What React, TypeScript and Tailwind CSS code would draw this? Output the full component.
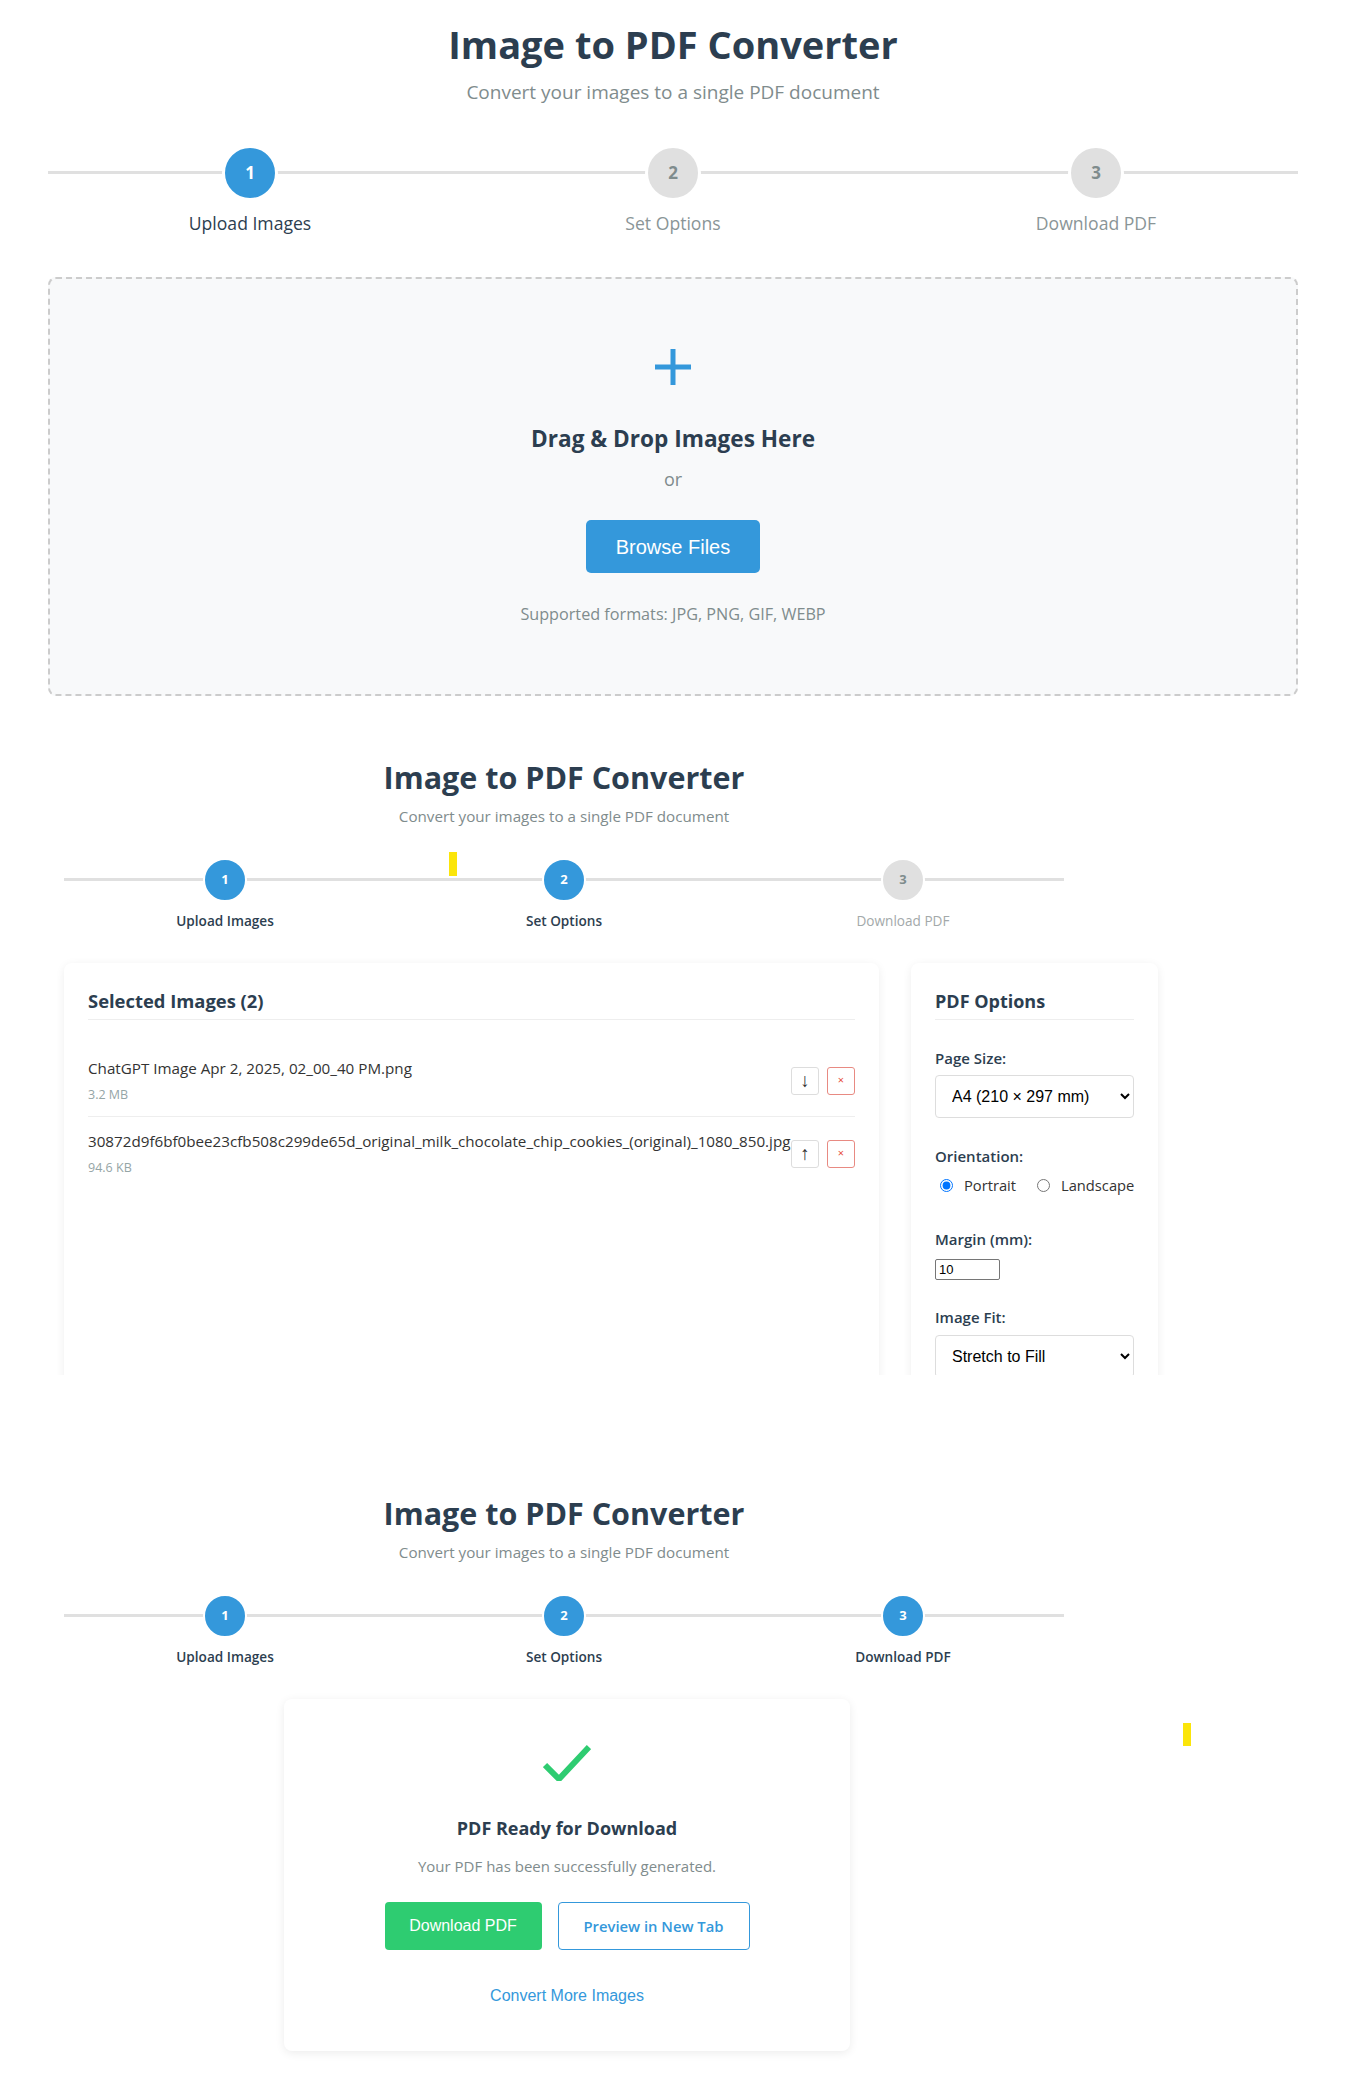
const sans = "font-['Open_Sans',sans-serif]";
const arial = "font-['Liberation_Sans',Arial,sans-serif]";

const STEP_LABELS = ["Upload Images", "Set Options", "Download PDF"];

function Steps({ active, big }: { active: number; big: boolean }) {
  return (
    <div
      className={
        big
          ? "relative w-[1250px] ml-[48px] mt-[41px] flex justify-between px-[127px]"
          : "relative w-[1000px] ml-[64px] mt-[32px] flex justify-between px-[101px]"
      }
    >
      <div
        className={
          big
            ? "absolute left-0 right-0 top-[26px] h-[3px] bg-[#e0e0e0]"
            : "absolute left-0 right-0 top-[20px] h-[3px] bg-[#e0e0e0]"
        }
      />
      {STEP_LABELS.map((label, i) => {
        const on = i + 1 <= active;
        return (
          <div key={label} className={big ? "relative w-[150px] flex flex-col items-center" : "relative w-[120px] flex flex-col items-center"}>
            <div
              className={
                (big
                  ? "w-[56px] h-[56px] border-[3px] text-[17px] "
                  : "w-[44px] h-[44px] border-2 text-[13px] ") +
                "rounded-full border-white flex items-center justify-center font-bold " +
                (on ? "bg-[#3498db] text-white" : "bg-[#e0e0e0] text-[#7f8c8d]")
              }
            >
              {i + 1}
            </div>
            <div
              className={
                (big ? "mt-[11px] leading-[22px] text-[17.6px] " : "mt-[10px] leading-[18px] text-[13.6px] ") +
                "whitespace-nowrap " +
                (on
                  ? big
                    ? "text-[#2c3e50] font-medium"
                    : "text-[#2c3e50] font-semibold"
                  : big
                    ? "text-[#8a9597]"
                    : "text-[#a3a9aa]")
              }
            >
              {label}
            </div>
          </div>
        );
      })}
    </div>
  );
}

function Header({ big }: { big: boolean }) {
  return (
    <div className={big ? "w-[1250px] ml-[48px] text-center" : "w-[1000px] ml-[64px] text-center"}>
      <h1
        className={
          big
            ? "text-[38px] leading-[48px] font-bold text-[#2c3e50]"
            : "text-[30.5px] leading-[40px] font-bold text-[#2c3e50]"
        }
      >
        Image to PDF Converter
      </h1>
      <p
        className={
          big
            ? "mt-[12px] text-[19px] leading-[24px] text-[#7f8c8d]"
            : "mt-[9px] text-[15.2px] leading-[20px] text-[#7f8c8d]"
        }
      >
        Convert your images to a single PDF document
      </p>
    </div>
  );
}

function ImageItem({ name, size, first }: { name: string; size: string; first: boolean }) {
  return (
    <div className={"flex items-center pt-[14px] pb-[13px] " + (first ? "border-b border-[#eeeeee]" : "")}>
      <div className="flex-1 min-w-0">
        <div className="text-[15.2px] leading-[20px] text-[#333333] whitespace-nowrap">{name}</div>
        <div className="mt-[9px] text-[12.5px] leading-[16px] text-[#95a5a6]">{size}</div>
      </div>
      <button className="w-[28px] h-[28px] shrink-0 border border-[#dddddd] rounded-[3px] bg-white text-[19px] leading-none text-[#333333] flex items-center justify-center">
        {first ? "↓" : "↑"}
      </button>
      <button className="ml-[8px] w-[28px] h-[28px] shrink-0 border border-[#e88a82] rounded-[3px] bg-white text-[11px] text-[#e74c3c] flex items-center justify-center">
        ×
      </button>
    </div>
  );
}

function OptionLabel({ children }: { children: string }) {
  return <div className="text-[15px] leading-[20px] font-semibold text-[#2c3e50]">{children}</div>;
}

export default function App() {
  return (
    <div className={`${sans} bg-white w-full min-h-[2098px] text-[#333333]`}>
      {/* step 1: upload */}
      <section className="pt-[20px]">
        <Header big />
        <Steps active={1} big />
        <div className="mt-[43px] ml-[48px] w-[1250px] border-2 border-dashed border-[#cccccc] rounded-[8px] bg-[#f8f9fa] flex flex-col items-center pt-[70px] pb-[69px]">
          <svg width="36" height="36" viewBox="0 0 36 36">
            <path d="M18 0V36M0 18H36" stroke="#3498db" strokeWidth="5" />
          </svg>
          <div className="mt-[39px] text-[22.6px] leading-[30px] font-bold text-[#2c3e50]">Drag &amp; Drop Images Here</div>
          <div className="mt-[14px] text-[18px] leading-[22px] text-[#7f8c8d]">or</div>
          <button className={`${arial} mt-[30px] w-[174px] h-[53px] rounded-[5px] bg-[#3498db] text-white text-[20px]`}>
            Browse Files
          </button>
          <div className="mt-[30px] text-[16.2px] leading-[22px] text-[#7f8c8d]">Supported formats: JPG, PNG, GIF, WEBP</div>
        </div>
      </section>

      {/* step 2: options */}
      <section className="relative h-[679px] overflow-hidden pt-[61px]">
        <Header big={false} />
        <Steps active={2} big={false} />
        <div className="absolute left-[449px] top-[156px] w-[8px] h-[24px] bg-[#fbe50a]" />
        <div className="mt-[33px] ml-[64px] flex items-start gap-[32px]">
          <div className="w-[815px] min-h-[480px] bg-white rounded-[8px] shadow-[0_2px_10px_rgba(0,0,0,0.07)] px-[24px] pt-[24px]">
            <h3 className="text-[18.4px] leading-[28px] pb-[4px] font-bold text-[#2c3e50] border-b border-[#eeeeee]">
              Selected Images (2)
            </h3>
            <div className="mt-[24px]">
              <ImageItem name="ChatGPT Image Apr 2, 2025, 02_00_40 PM.png" size="3.2 MB" first />
              <ImageItem
                name="30872d9f6bf0bee23cfb508c299de65d_original_milk_chocolate_chip_cookies_(original)_1080_850.jpg"
                size="94.6 KB"
                first={false}
              />
            </div>
          </div>
          <div className="w-[247px] min-h-[480px] bg-white rounded-[8px] shadow-[0_2px_10px_rgba(0,0,0,0.07)] px-[24px] pt-[24px]">
            <h3 className="text-[18px] leading-[28px] pb-[4px] font-bold text-[#2c3e50] border-b border-[#eeeeee]">
              PDF Options
            </h3>
            <div className="mt-[28px]">
              <OptionLabel>Page Size:</OptionLabel>
              <select
                defaultValue="a4"
                className={`${arial} mt-[7px] w-full h-[43px] border border-[#dddddd] rounded-[4px] bg-white px-[12px] text-[16px] text-black`}
              >
                <option value="a4">A4 (210 × 297 mm)</option>
                <option value="letter">Letter</option>
              </select>
            </div>
            <div className="mt-[28px]">
              <OptionLabel>Orientation:</OptionLabel>
              <div className="mt-[9px] flex items-center text-[14.7px] leading-[20px] text-[#333333]">
                <label className="flex items-center">
                  <input type="radio" name="orient" defaultChecked className="ml-[5px] mr-[11px] w-[13px] h-[13px] accent-[#0075ff]" />
                  Portrait
                </label>
                <label className="ml-[16px] flex items-center">
                  <input type="radio" name="orient" className="ml-[5px] mr-[11px] w-[13px] h-[13px] accent-[#0075ff]" />
                  Landscape
                </label>
              </div>
            </div>
            <div className="mt-[34px]">
              <OptionLabel>Margin (mm):</OptionLabel>
              <input
                type="number"
                defaultValue={10}
                className={`${arial} mt-[10px] block w-[65px] h-[21px] border border-[#767676] rounded-[2px] px-[3px] text-[13px] text-black`}
              />
            </div>
            <div className="mt-[27px]">
              <OptionLabel>Image Fit:</OptionLabel>
              <select
                defaultValue="stretch"
                className={`${arial} mt-[8px] w-full h-[43px] border border-[#dddddd] rounded-[4px] bg-white px-[12px] text-[16px] text-black`}
              >
                <option value="stretch">Stretch to Fill</option>
                <option value="fit">Fit</option>
              </select>
            </div>
          </div>
        </div>
      </section>

      {/* step 3: download */}
      <section className="relative pt-[118px] pb-[47px]">
        <Header big={false} />
        <Steps active={3} big={false} />
        <div className="absolute left-[1183px] top-[348px] w-[8px] h-[23px] bg-[#fbe50a]" />
        <div className="mt-[33px] ml-[284px] w-[566px] bg-white rounded-[8px] shadow-[0_2px_10px_rgba(0,0,0,0.08)] pt-[45px] pb-[45px] flex flex-col items-center">
          <svg width="48" height="37" viewBox="0 0 48 37">
            <polyline points="2,21 16,35 46,3" fill="none" stroke="#2ecc71" strokeWidth="6" />
          </svg>
          <div className="mt-[34px] text-[18px] leading-[26px] font-bold text-[#2c3e50]">PDF Ready for Download</div>
          <div className="mt-[15px] text-[15px] leading-[20px] text-[#7f8c8d]">Your PDF has been successfully generated.</div>
          <div className="mt-[26px] flex gap-[16px]">
            <button className={`${arial} w-[157px] h-[48px] rounded-[4px] bg-[#2ecc71] text-white text-[16px]`}>
              Download PDF
            </button>
            <button className="w-[192px] h-[48px] rounded-[4px] border border-[#3498db] bg-white text-[#3498db] text-[14.8px] font-semibold">
              Preview in New Tab
            </button>
          </div>
          <button className={`${arial} mt-[36px] text-[16px] leading-[20px] text-[#3498db]`}>Convert More Images</button>
        </div>
      </section>
    </div>
  );
}
